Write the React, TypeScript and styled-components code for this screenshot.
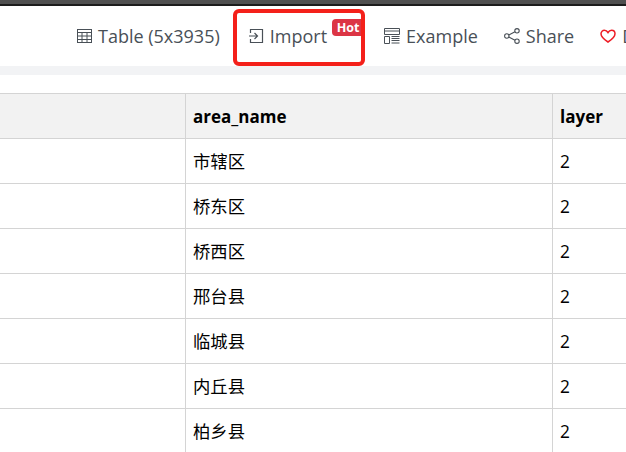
import React from "react"
import styled, { createGlobalStyle } from "styled-components"

const Global = createGlobalStyle`
  html, body {
    margin: 0;
    padding: 0;
    background: #fff;
    overflow: hidden;
  }
  body {
    font-family: "Open Sans", "Noto Sans CJK SC", sans-serif;
  }
`

const Page = styled.div`
  width: 626px;
  height: 452px;
  overflow: hidden;
  position: relative;
`
const TopEdge = styled.div`
  height: 4px;
  background: #505050;
  border-bottom: 2px solid #1c1c1c;
`
const Toolbar = styled.div`
  height: 60px;
  display: flex;
  align-items: center;
  padding: 0 0 1px 76px;
  box-sizing: border-box;
  white-space: nowrap;
  overflow: hidden;
`
const Item = styled.div<{ $gap: number }>`
  display: flex;
  flex: none;
  align-items: center;
  gap: 6px;
  margin-right: ${(p) => p.$gap}px;
  font-size: 18px;
  color: #495057;
  position: relative;
`
const Icon = styled.svg`
  flex: none;
  display: block;
`
const Badge = styled.span`
  position: absolute;
  top: -5px;
  left: 84px;
  padding: 0 5px;
  height: 17px;
  line-height: 17px;
  font-size: 12.5px;
  font-weight: 700;
  color: #fff;
  background: #dc3545;
  border-radius: 4px;
`
const Highlight = styled.div`
  position: absolute;
  left: 233px;
  top: 9px;
  width: 132px;
  height: 57px;
  box-sizing: border-box;
  border: 4px solid #f4201a;
  border-radius: 6px;
  pointer-events: none;
`
const Band = styled.div`
  height: 9px;
  background: #f2f3f5;
`
const TableWrap = styled.div`
  padding-top: 18px;
`
const Table = styled.table`
  border-collapse: collapse;
  table-layout: fixed;
  width: 801px;
  margin-left: -1px;
  color: #000;
  font-size: 17.33px;
`
const Col = styled.col<{ $w: number }>`
  width: ${(p) => p.$w}px;
`
const Head = styled.th`
  height: 44px;
  padding: 0 7px;
  text-align: left;
  font-size: 17px;
  font-weight: 700;
  background: #f2f2f2;
  border: 1px solid #d4d4d4;
`
const Cell = styled.td`
  height: 44px;
  padding: 0 7px;
  border: 1px solid #d4d4d4;
`
const NameCell = styled(Cell)`
  padding-bottom: 2px;
  box-sizing: border-box;
`

const TableIcon = () => (
  <Icon width="16" height="16" viewBox="0 0 16 16" fill="none" stroke="#495057" strokeWidth="1">
    <rect x="1.500" y="1.500" width="14" height="13" />
    <path d="M1.500 4.500h14M1.500 8h14M1.500 11.500h14M6 4.500v10M11 4.500v10" />
  </Icon>
)
const ImportIcon = () => (
  <Icon width="16" height="16" viewBox="0 0 16 16" fill="none" stroke="#495057" strokeWidth="1.200">
    <path d="M2.500 5V1.500h12v13h-12V11" />
    <path d="M1 8h8.500M6.500 5l3 3-3 3" />
  </Icon>
)
const ExampleIcon = () => (
  <Icon width="16" height="16" viewBox="0 0 16 16" fill="none" stroke="#495057" strokeWidth="1">
    <path d="M.5.500h15v6H.5zM.5 3h15" />
    <path d="M.5 8.500h5v7h-5zM7.500 8.500h8M7.500 10.500h8M7.500 12.500h8M7.500 15h8" />
  </Icon>
)
const ShareIcon = () => (
  <Icon width="16" height="16" viewBox="0 0 16 16" fill="none" stroke="#495057" strokeWidth="1.100">
    <circle cx="2.800" cy="8" r="2.200" />
    <circle cx="13" cy="2.800" r="2.200" />
    <circle cx="13" cy="13.200" r="2.200" />
    <path d="M4.800 7 11 3.800M4.800 9 11 12.200" />
  </Icon>
)
const HeartIcon = () => (
  <Icon width="16" height="16" viewBox="0 0 16 16" fill="none" stroke="#ee1c25" strokeWidth="1.500">
    <path d="M8 14C4 11.500 1 9 1 5.800 1 3.600 2.700 2.300 4.400 2.300 6 2.300 7.200 3.200 8 4.500 8.800 3.200 10 2.300 11.600 2.300 13.300 2.300 15 3.600 15 5.800 15 9 12 11.500 8 14Z" />
  </Icon>
)

const rows = ["市辖区", "桥东区", "桥西区", "邢台县", "临城县", "内丘县", "柏乡县"]

const App = () => {
  return (
    <Page>
      <Global />
      <TopEdge />
      <Toolbar>
        <Item $gap={28}>
          <TableIcon />
          Table (5x3935)
        </Item>
        <Item $gap={57}>
          <ImportIcon />
          Import
          <Badge>Hot</Badge>
        </Item>
        <Item $gap={26}>
          <ExampleIcon />
          Example
        </Item>
        <Item $gap={26}>
          <ShareIcon />
          Share
        </Item>
        <Item $gap={0}>
          <HeartIcon />
          Donate
        </Item>
      </Toolbar>
      <Band />
      <TableWrap>
        <Table>
          <colgroup>
            <Col $w={186} />
            <Col $w={367} />
            <Col $w={248} />
          </colgroup>
          <thead>
            <tr>
              <Head />
              <Head>area_name</Head>
              <Head>layer</Head>
            </tr>
          </thead>
          <tbody>
            {rows.map((name) => (
              <tr key={name}>
                <Cell />
                <NameCell>{name}</NameCell>
                <Cell>2</Cell>
              </tr>
            ))}
          </tbody>
        </Table>
      </TableWrap>
      <Highlight />
    </Page>
  )
}

export default App
